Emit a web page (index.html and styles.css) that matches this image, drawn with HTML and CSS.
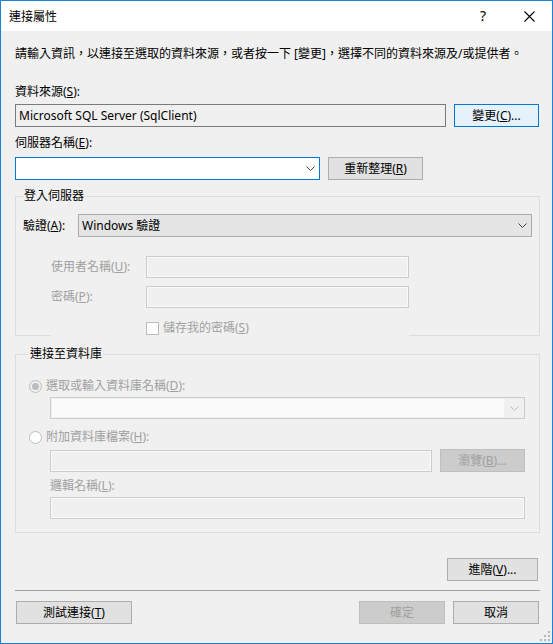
FILE: index.html
```html
<!DOCTYPE html>
<html>
<head>
  <title>連接屬性</title>
  <link rel="stylesheet" href="styles.css">
</head>
<body>
  <div class="window">
    <div class="titlebar">
      <span class="title">連接屬性</span>
      <span class="caption-btn help">?</span>
      <span class="caption-btn close">
        <svg width="11" height="11" viewBox="0 0 11 11"><path d="M0.5 0.5L10.5 10.5M10.5 0.5L0.5 10.5" stroke="#000" stroke-width="1.1"/></svg>
      </span>
    </div>

    <div class="content">
      <p class="intro">請輸入資訊，以連接至選取的資料來源，或者按一下 [變更]，選擇不同的資料來源及/或提供者。</p>

      <div class="label first">資料來源(<u>S</u>):</div>
      <div class="row source-row">
        <div class="textbox readonly">Microsoft SQL Server (SqlClient)</div>
        <button type="button" class="btn default w85">變更(<u>C</u>)...</button>
      </div>

      <div class="label">伺服器名稱(<u>E</u>):</div>
      <div class="row server-row">
        <div class="combo focused w305">
          <span class="combo-text"></span>
          <svg class="chevron" width="9" height="5" viewBox="0 0 9 5"><path d="M0.5 0.5L4.5 4.5L8.5 0.5" fill="none" stroke="#404040"/></svg>
        </div>
        <button type="button" class="btn w95">重新整理(<u>R</u>)</button>
      </div>

      <fieldset class="group login-group">
        <legend>登入伺服器</legend>
        <div class="row auth-row">
          <span class="auth-label">驗證(<u>A</u>):</span>
          <div class="combo dropdown">
            <span class="combo-text">Windows 驗證</span>
            <svg class="chevron" width="9" height="5" viewBox="0 0 9 5"><path d="M0.5 0.5L4.5 4.5L8.5 0.5" fill="none" stroke="#404040"/></svg>
          </div>
        </div>
        <div class="row field-row user-row">
          <span class="field-label disabled">使用者名稱(<u>U</u>):</span>
          <div class="textbox off w263"></div>
        </div>
        <div class="row field-row pass-row">
          <span class="field-label disabled">密碼(<u>P</u>):</span>
          <div class="textbox off w263"></div>
        </div>
        <div class="row field-row check-row">
          <span class="checkbox"></span>
          <span class="disabled">儲存我的密碼(<u>S</u>)</span>
        </div>
      </fieldset>

      <fieldset class="group db-group">
        <legend>連接至資料庫</legend>
        <div class="row radio-row first-radio">
          <span class="radio checked"></span>
          <span class="disabled">選取或輸入資料庫名稱(<u>D</u>):</span>
        </div>
        <div class="combo off indent db-combo">
          <span class="combo-inner"></span>
          <svg class="chevron" width="9" height="5" viewBox="0 0 9 5"><path d="M0.5 0.5L4.5 4.5L8.5 0.5" fill="none" stroke="#bcbcbc"/></svg>
        </div>
        <div class="row radio-row second-radio">
          <span class="radio"></span>
          <span class="disabled">附加資料庫檔案(<u>H</u>):</span>
        </div>
        <div class="row indent file-row">
          <div class="textbox off file-box"></div>
          <button type="button" class="btn off w85">瀏覽(<u>B</u>)...</button>
        </div>
        <div class="label indent disabled logical-label">邏輯名稱(<u>L</u>):</div>
        <div class="textbox off indent logical-box"></div>
      </fieldset>

      <div class="row advanced-row">
        <button type="button" class="btn w91">進階(<u>V</u>)...</button>
      </div>

      <div class="separator"></div>

      <div class="row footer">
        <button type="button" class="btn w116">測試連接(<u>T</u>)</button>
        <span class="spacer"></span>
        <button type="button" class="btn off w86">確定</button>
        <button type="button" class="btn w86">取消</button>
      </div>
    </div>

    <svg class="grip" width="10" height="10" viewBox="0 0 10 10">
      <rect x="8" y="0" width="2" height="2" fill="#b8b8b8"/>
      <rect x="4" y="4" width="2" height="2" fill="#b8b8b8"/>
      <rect x="8" y="4" width="2" height="2" fill="#b8b8b8"/>
      <rect x="0" y="8" width="2" height="2" fill="#b8b8b8"/>
      <rect x="4" y="8" width="2" height="2" fill="#b8b8b8"/>
      <rect x="8" y="8" width="2" height="2" fill="#b8b8b8"/>
    </svg>
  </div>
</body>
</html>
```

FILE: styles.css
```css
/* Page and window frame */
html, body {
  margin: 0;
  padding: 0;
}
body {
  font-family: "Noto Sans", "Noto Sans CJK TC", sans-serif;
  font-size: 12px;
  line-height: 16px;
  color: #000;
}
.window {
  position: relative;
  box-sizing: border-box;
  width: 553px;
  height: 644px;
  border: 1px solid #1883d7;
  background: #f0f0f0;
  display: flex;
  flex-direction: column;
}
u {
  text-decoration: underline;
  text-underline-offset: 1px;
}

/* Title bar */
.titlebar {
  height: 30px;
  background: #fff;
  display: flex;
  align-items: center;
  padding-left: 8px;
}
.title {
  flex: 1;
  font-family: "Noto Sans CJK TC", sans-serif;
}
.caption-btn {
  width: 46px;
  height: 30px;
  display: flex;
  align-items: center;
  justify-content: center;
}
.help {
  font-size: 14px;
  padding-left: 2px;
}

/* Dialog content */
.content {
  flex: 1;
  padding: 15px 12px 0 14px;
  display: flex;
  flex-direction: column;
}
.intro {
  margin: 0;
}
.label.first {
  margin-top: 22px;
}
.label {
  margin-top: 8px;
}
.row {
  display: flex;
  align-items: center;
}
.source-row {
  margin-top: 4px;
  gap: 8px;
  padding-right: 1px;
}
.server-row {
  margin-top: 6px;
  gap: 8px;
}
.disabled {
  color: #a0a0a0;
}

/* Buttons */
.btn {
  box-sizing: border-box;
  height: 23px;
  padding: 0;
  margin: 0;
  font: inherit;
  color: #000;
  background: #e1e1e1;
  border: 1px solid #adadad;
  text-align: center;
}
.btn.default {
  background: #e5f1fb;
  border-color: #0078d7;
}
.btn.off {
  background: #cccccc;
  border-color: #bfbfbf;
  color: #a0a0a0;
}
.w85 { width: 85px; }
.w86 { width: 86px; }
.w91 { width: 91px; }
.w95 { width: 95px; }
.w116 { width: 116px; }

/* Text boxes and combo boxes */
.textbox {
  box-sizing: border-box;
  height: 23px;
  border: 1px solid #7a7a7a;
  padding: 0 3px;
  display: flex;
  align-items: center;
}
.textbox.readonly {
  flex: 1;
  background: #f0f0f0;
}
.textbox.off {
  height: 22px;
  border-color: #cccccc;
  background: #f0f0f0;
  box-shadow: inset 0 0 0 1px #fafafa;
}
.w263 { width: 263px; }
.w305 { width: 305px; }

.combo {
  box-sizing: border-box;
  height: 23px;
  display: flex;
  align-items: center;
  padding-left: 3px;
  border: 1px solid #7a7a7a;
  background: #fff;
}
.combo.focused {
  border-color: #0078d7;
}
.combo.dropdown {
  flex: 1;
  background: #e5e5e5;
  border-color: #acacac;
}
.combo.off {
  height: 22px;
  padding: 1px;
  border-color: #cccccc;
  background: #f0f0f0;
}
.combo-text {
  flex: 1;
}
.combo-inner {
  flex: 1;
  align-self: stretch;
  background: #fafafa;
  margin-right: 6px;
}
.chevron {
  margin-right: 4px;
}

/* Group boxes */
.group {
  margin: 8px 0 0 0;
  border: 1px solid #dcdcdc;
  min-width: 0;
}
.group legend {
  padding: 0 1px;
  line-height: 16px;
}
.login-group {
  padding: 10px 7px 0 7px;
}
.auth-label {
  width: 55px;
}
.field-row {
  margin-left: 28px;
}
.field-label {
  width: 95px;
}
.user-row {
  margin-top: 19px;
}
.pass-row {
  margin-top: 8px;
}
/* the checkbox row sits over the group's bottom edge */
.check-row {
  position: relative;
  margin-top: 11px;
  margin-bottom: -2px;
  height: 18px;
  width: 358px;
  padding-left: 95px;
  box-sizing: border-box;
  background: #f0f0f0;
}
.checkbox {
  box-sizing: border-box;
  width: 13px;
  height: 13px;
  border: 1px solid #bcbcbc;
  background: #fff;
  margin-right: 4px;
}

.db-group {
  margin-top: 10px;
  padding: 16px 14px 13px 13px;
}
.indent {
  margin-left: 21px;
}
.radio {
  box-sizing: border-box;
  width: 13px;
  height: 13px;
  border: 1px solid #bcbcbc;
  border-radius: 50%;
  background: #fff;
  margin-right: 4px;
  display: flex;
  align-items: center;
  justify-content: center;
}
.radio.checked {
  background: #f0f0f0;
}
.radio.checked::after {
  content: "";
  width: 7px;
  height: 7px;
  border-radius: 50%;
  background: #bcbcbc;
}
.db-combo {
  margin-top: 3px;
}
.second-radio {
  margin-top: 10px;
}
.file-row {
  margin-top: 4px;
  gap: 8px;
}
.file-box {
  flex: 1;
}
.logical-label {
  margin-top: 6px;
}
.logical-box {
  margin-top: 3px;
}

/* Bottom area */
.advanced-row {
  justify-content: flex-end;
  margin-top: 25px;
  padding-right: 2px;
}
.separator {
  margin-top: 9px;
  border-top: 1px solid #a0a0a0;
}
.footer {
  margin-top: 10px;
  padding: 0 1px;
  gap: 8px;
}
.spacer {
  flex: 1;
}
.grip {
  position: absolute;
  right: 2px;
  bottom: 2px;
}
```
